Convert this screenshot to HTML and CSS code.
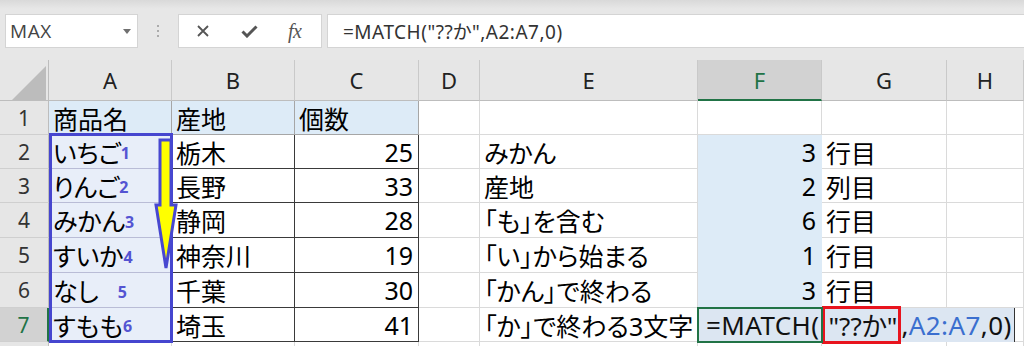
FILE: index.html
```html
<!DOCTYPE html>
<html lang="ja">
<head>
<meta charset="utf-8">
<title>MATCH</title>
<link rel="stylesheet" href="styles.css">
</head>
<body>
<div class="topbar">
  <div class="namebox"><span class="nb-text">MAX</span><span class="nb-caret"></span></div>
  <div class="grip"><i></i><i></i><i></i></div>
  <div class="fxbox">
    <svg class="ico-x" width="14" height="14" viewBox="0 0 14 14"><path d="M2 2 L12 12 M12 2 L2 12" stroke="#555" stroke-width="1.8" fill="none"/></svg>
    <svg class="ico-ok" width="17" height="13" viewBox="0 0 17 13"><path d="M1.5 6.5 L6 11 L15.5 1.5" stroke="#555" stroke-width="3" fill="none"/></svg>
    <span class="fx">fx</span>
  </div>
  <div class="formula">=MATCH("??か",A2:A7,0)</div>
</div>

<div class="sheetwrap">
  <div class="sheet">
    <div class="corner"><div class="tri"></div></div>
    <div class="ch">A</div><div class="ch">B</div><div class="ch">C</div><div class="ch">D</div><div class="ch">E</div><div class="ch sel">F</div><div class="ch">G</div><div class="ch">H</div>

    <div class="rh">1</div>
    <div class="c hd">商品名</div><div class="c hd">産地</div><div class="c hd">個数</div><div class="c"></div><div class="c"></div><div class="c"></div><div class="c"></div><div class="c"></div>

    <div class="rh">2</div>
    <div class="c a"><span>いちご</span><b class="no">1</b></div><div class="c t">栃木</div><div class="c t num">25</div><div class="c"></div><div class="c">みかん</div><div class="c f num">3</div><div class="c">行目</div><div class="c"></div>

    <div class="rh">3</div>
    <div class="c a"><span>りんご</span><b class="no">2</b></div><div class="c t">長野</div><div class="c t num">33</div><div class="c"></div><div class="c">産地</div><div class="c f num">2</div><div class="c">列目</div><div class="c"></div>

    <div class="rh">4</div>
    <div class="c a"><span>みかん</span><b class="no">3</b></div><div class="c t">静岡</div><div class="c t num">28</div><div class="c"></div><div class="c">「も」を含む</div><div class="c f num">6</div><div class="c">行目</div><div class="c"></div>

    <div class="rh">5</div>
    <div class="c a"><span>すいか</span><b class="no">4</b></div><div class="c t">神奈川</div><div class="c t num">19</div><div class="c"></div><div class="c">「い」から始まる</div><div class="c f num">1</div><div class="c">行目</div><div class="c"></div>

    <div class="rh">6</div>
    <div class="c a"><span>なし</span><b class="no">5</b></div><div class="c t">千葉</div><div class="c t num">30</div><div class="c"></div><div class="c">「かん」で終わる</div><div class="c f num">3</div><div class="c">行目</div><div class="c"></div>

    <div class="rh sel">7</div>
    <div class="c a last"><span>すもも</span><b class="no">6</b></div><div class="c t">埼玉</div><div class="c t num">41</div><div class="c"></div><div class="c">「か」で終わる3文字</div><div class="c"></div><div class="c"></div><div class="c"></div>

    <div class="rh"></div>
    <div class="c"></div><div class="c"></div><div class="c"></div><div class="c"></div><div class="c"></div><div class="c"></div><div class="c"></div><div class="c"></div>
  </div>

  <div class="overlay">
    <div class="frame"></div>
    <div class="arrow">
      <svg width="123" height="207" viewBox="0 0 123 207"><polygon points="111,5 122,5 122,70 127,70 117,133 107,70 111,70" fill="#ffff00" stroke="#4848d0" stroke-width="3" stroke-linejoin="miter"/></svg>
    </div>
    <div class="edit"><div class="editbg">=MATCH(<span class="redbox">"??か"</span>,<span class="ref">A2:A7</span>,0)</div></div>
    <div class="editbox"></div>
  </div>
</div>
</body>
</html>
```

FILE: styles.css
```css
html, body {
  margin: 0;
  padding: 0;
  width: 1024px;
  height: 346px;
  overflow: hidden;
  background: #fff;
  font-family: "Noto Sans", "Noto Sans CJK JP", sans-serif;
  color: #000;
}

.topbar {
  height: 60px;
  box-sizing: border-box;
  padding-top: 14px;
  display: flex;
  align-items: flex-start;
  background: linear-gradient(#d9d9d9 0, #e7e7e7 9px, #e7e7e7 100%);
}

.namebox {
  margin-left: 5px;
  width: 133px;
  height: 34px;
  box-sizing: border-box;
  background: #fff;
  border: 1px solid #d4d4d4;
  display: flex;
  align-items: center;
  justify-content: space-between;
  padding: 0 6px 0 4px;
}
.nb-text {
  font-family: "Open Sans", "Noto Sans", sans-serif;
  font-size: 19px;
  color: #444;
  letter-spacing: 0.6px;
}
.nb-caret {
  width: 0;
  height: 0;
  border-left: 4.5px solid transparent;
  border-right: 4.5px solid transparent;
  border-top: 5px solid #707070;
}

.grip {
  width: 40px;
  height: 34px;
  display: flex;
  flex-direction: column;
  align-items: center;
  justify-content: center;
  gap: 3px;
}
.grip i {
  display: block;
  width: 2px;
  height: 2px;
  background: #ababab;
}

.fxbox {
  width: 144px;
  height: 34px;
  box-sizing: border-box;
  background: #fff;
  border: 1px solid #d4d4d4;
  display: flex;
  align-items: center;
}
.ico-x { margin-left: 17px; }
.ico-ok { margin-left: 31px; }
.fx {
  margin-left: 30px;
  font-family: "Liberation Serif", serif;
  font-style: italic;
  font-size: 20px;
  color: #555;
  letter-spacing: -0.5px;
}

.formula {
  margin-left: 5px;
  flex: 1;
  height: 34px;
  box-sizing: border-box;
  background: #fff;
  border: 1px solid #d4d4d4;
  border-right: none;
  padding-left: 15px;
  display: flex;
  align-items: center;
  font-size: 19px;
  letter-spacing: 0.5px;
  color: #333;
  font-feature-settings: "palt";
}

.sheetwrap {
  display: grid;
}
.sheet, .overlay {
  grid-area: 1 / 1;
  display: grid;
  grid-template-columns: 49px 123px 123px 124px 61px 218px 124px 125px 77px;
  grid-template-rows: 41px 34px 34px 34px 35px 35px 35px 34px 20px;
}
.overlay { pointer-events: none; }

.sheet > div { box-sizing: border-box; }

.corner {
  background: #e6e6e6;
  border-right: 1px solid #bdbdbd;
  border-bottom: 1px solid #bdbdbd;
  display: flex;
  justify-content: flex-end;
  align-items: flex-end;
  padding-right: 2px;
}
.tri {
  width: 34px;
  height: 34px;
  background: #bcbcbc;
  clip-path: polygon(100% 0, 100% 100%, 0 100%);
}

.ch {
  background: #e6e6e6;
  border-right: 1px solid #c9c9c9;
  border-bottom: 1px solid #bdbdbd;
  display: flex;
  align-items: center;
  justify-content: center;
  font-size: 22px;
  color: #222;
}
.ch.sel {
  background: #d2d2d2;
  color: #217346;
  border-bottom: 2px solid #217346;
}

.rh {
  background: #e6e6e6;
  border-right: 1px solid #bdbdbd;
  border-bottom: 1px solid #cfcfcf;
  display: flex;
  align-items: center;
  justify-content: center;
  font-size: 21px;
  color: #333;
}
.rh.sel {
  background: #d2d2d2;
  color: #217346;
  border-right: 2px solid #217346;
}

.c {
  border-right: 1px solid #dadada;
  border-bottom: 1px solid #dadada;
  display: flex;
  align-items: center;
  padding: 0 5px 0 4px;
  font-size: 25px;
  white-space: nowrap;
  font-feature-settings: "palt";
}
.c.hd {
  background: #ddebf7;
  border-right-color: #a6a6a6;
  border-bottom-color: #a6a6a6;
}
.c.t {
  border-right-color: #3a3a3a;
  border-bottom-color: #3a3a3a;
}
.c.num { justify-content: flex-end; }
.c.f {
  background: #ddebf7;
  border-color: #ddebf7;
}
.c.a {
  background: #e8eef9;
  border-bottom-color: #b9bcd6;
  justify-content: space-between;
  padding-right: 44px;
}
.c.a.last { border-bottom-color: #3a3a3a; }
.no {
  font-family: "Noto Sans", sans-serif;
  font-size: 16px;
  font-weight: 700;
  color: #5454d2;
  padding-top: 3px;
}

.frame {
  grid-column: 2;
  grid-row: 3 / 9;
  border: 3px solid #4646cf;
  margin: -2px -1px -1px 0;
}
.arrow {
  grid-column: 2;
  grid-row: 3 / 9;
}
.arrow svg { overflow: visible; display: block; }

.edit {
  grid-column: 7 / 10;
  grid-row: 8;
  display: flex;
}
.editbg {
  width: 317px;
  box-sizing: border-box;
  background: #dce6f2;
  border-right: 1px solid #333;
  display: flex;
  align-items: center;
  padding-left: 8px;
  font-size: 26px;
  letter-spacing: 0.4px;
  white-space: nowrap;
  color: #111;
  font-feature-settings: "palt";
}
.redbox {
  box-sizing: border-box;
  height: 38px;
  border: 3px solid #e8141e;
  padding: 0 1px 0 3px;
  margin-left: 3px;
  letter-spacing: 0;
  display: flex;
  align-items: center;
}
.ref { color: #3b6fcf; }

.editbox {
  grid-column: 7;
  grid-row: 8;
  border: 2px solid #217346;
  margin: -1px;
}
```
